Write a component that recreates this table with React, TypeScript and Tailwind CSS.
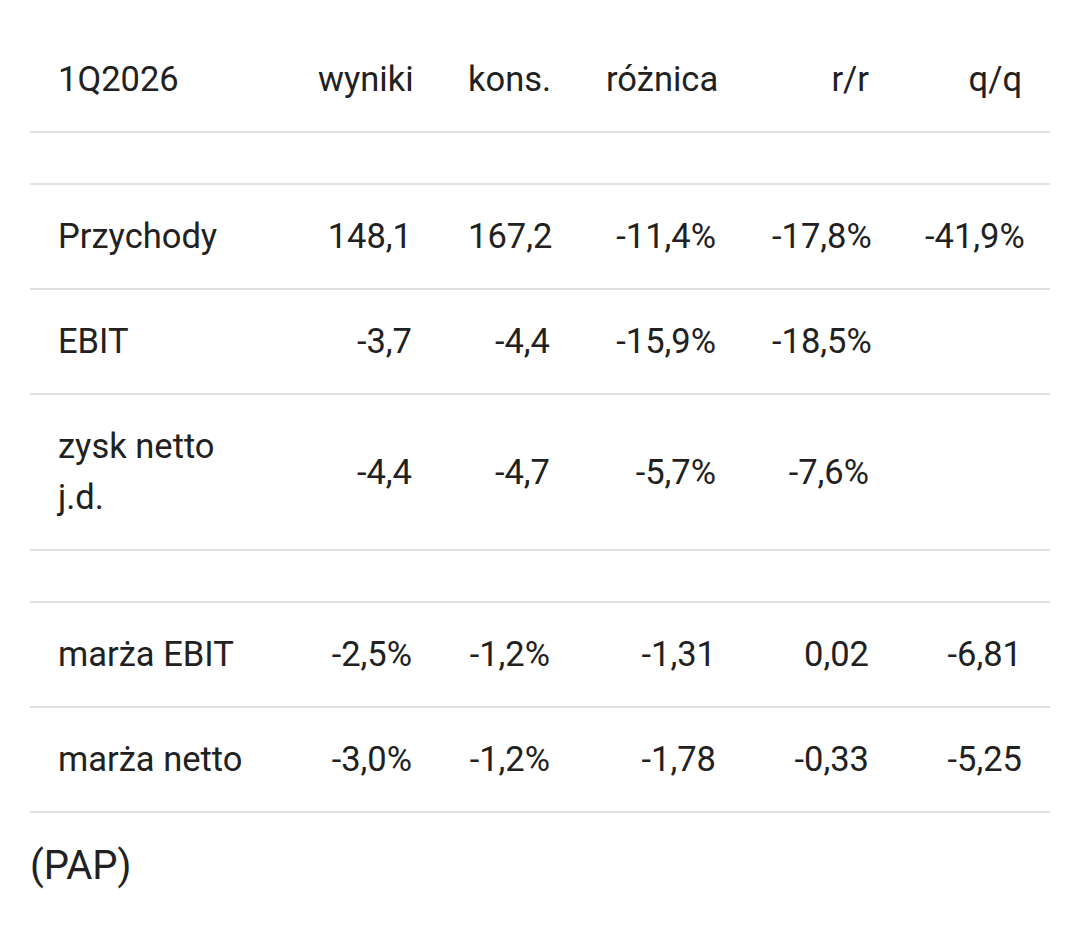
const header = ["1Q2026", "wyniki", "kons.", "różnica", "r/r", "q/q"]

type Row = string[] | null

const rows: Row[] = [
  null,
  ["Przychody", "148,1", "167,2", "-11,4%", "-17,8%", "-41,9%"],
  ["EBIT", "-3,7", "-4,4", "-15,9%", "-18,5%", ""],
  ["zysk netto j.d.", "-4,4", "-4,7", "-5,7%", "-7,6%", ""],
  null,
  ["marża EBIT", "-2,5%", "-1,2%", "-1,31", "0,02", "-6,81"],
  ["marża netto", "-3,0%", "-1,2%", "-1,78", "-0,33", "-5,25"],
]

const widths = ["w-[260px]", "w-[150px]", "w-[138px]", "w-[166px]", "w-[153px]", "w-[153px]"]

export default function App() {
  return (
    <div className="min-h-screen bg-white px-[30px] pt-[28px] font-['Roboto',sans-serif] text-[34.5px] leading-[51px] text-[#212121]">
      <table className="w-[1020px] table-fixed border-collapse">
        <thead>
          <tr className="border-b-2 border-[#e0e0e0]">
            {header.map((h, i) => (
              <th
                key={h}
                className={`${widths[i]} px-[28px] py-[26px] font-normal ${i === 0 ? "text-left" : "text-right"}`}
              >
                {h}
              </th>
            ))}
          </tr>
        </thead>
        <tbody>
          {rows.map((row, r) =>
            row === null ? (
              <tr key={r} className="border-b-2 border-[#e0e0e0]">
                <td colSpan={6} className="h-[52px] p-0" />
              </tr>
            ) : (
              <tr key={r} className="border-b-2 border-[#e0e0e0]">
                {row.map((c, i) => (
                  <td
                    key={i}
                    className={`px-[28px] py-[26px] align-middle ${i === 0 ? "text-left" : "text-right"}`}
                  >
                    {i === 0 && c === "zysk netto j.d." ? (
                      <>
                        zysk netto
                        <br />
                        j.d.
                      </>
                    ) : (
                      c
                    )}
                  </td>
                ))}
              </tr>
            )
          )}
        </tbody>
      </table>
      <p className="mt-[27px] text-[40px]">(PAP)</p>
    </div>
  )
}
